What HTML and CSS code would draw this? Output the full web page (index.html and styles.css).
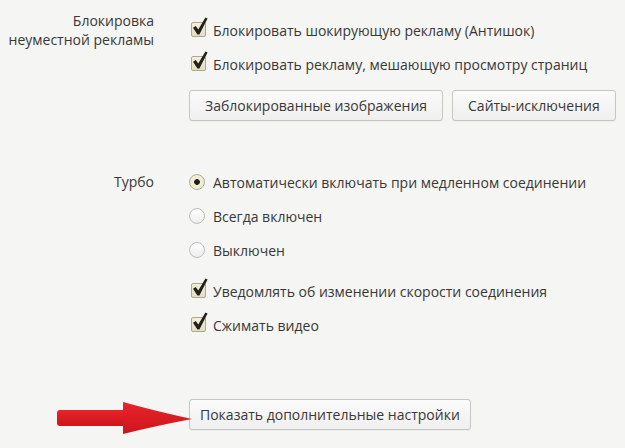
FILE: index.html
```html
<!DOCTYPE html>
<html lang="ru">
<head>
<meta charset="utf-8">
<title>Настройки</title>
<link rel="stylesheet" href="styles.css">
</head>
<body>
<div class="settings">
  <section class="section section-ads">
    <div class="label label-ads">Блокировка<br>неуместной рекламы</div>
    <div class="options">
      <div class="option">
        <span class="control"><svg class="checkbox" width="17" height="20" viewBox="0 0 17 20"><defs><linearGradient id="cb1" x1="0" y1="0" x2="0" y2="1"><stop offset="0" stop-color="#f4f0dc"/><stop offset="1" stop-color="#e4ddc0"/></linearGradient></defs><rect x="0.5" y="5.5" width="14" height="14" rx="1.5" fill="url(#cb1)" stroke="#aea790"/><path d="M2 10.8 L4.7 9 L7.3 12.4 L14.4 0.4 L16.6 1.6 L8.4 17.4 L6.4 17.4 Z" fill="#23221a"/></svg></span>
        <span class="text">Блокировать шокирующую рекламу (Антишок)</span>
      </div>
      <div class="option">
        <span class="control"><svg class="checkbox" width="17" height="20" viewBox="0 0 17 20"><rect x="0.5" y="5.5" width="14" height="14" rx="1.5" fill="url(#cb1)" stroke="#aea790"/><path d="M2 10.8 L4.7 9 L7.3 12.4 L14.4 0.4 L16.6 1.6 L8.4 17.4 L6.4 17.4 Z" fill="#23221a"/></svg></span>
        <span class="text">Блокировать рекламу, мешающую просмотру страниц</span>
      </div>
      <div class="buttons">
        <button class="btn">Заблокированные изображения</button>
        <button class="btn">Сайты-исключения</button>
      </div>
    </div>
  </section>

  <section class="section section-turbo">
    <div class="label label-turbo">Турбо</div>
    <div class="options">
      <div class="radio-group">
        <div class="option">
          <span class="control"><span class="radio checked"></span></span>
          <span class="text">Автоматически включать при медленном соединении</span>
        </div>
        <div class="option">
          <span class="control"><span class="radio"></span></span>
          <span class="text">Всегда включен</span>
        </div>
        <div class="option">
          <span class="control"><span class="radio"></span></span>
          <span class="text">Выключен</span>
        </div>
      </div>
      <div class="check-group">
        <div class="option">
          <span class="control"><svg class="checkbox" width="17" height="20" viewBox="0 0 17 20"><rect x="0.5" y="5.5" width="14" height="14" rx="1.5" fill="url(#cb1)" stroke="#aea790"/><path d="M2 10.8 L4.7 9 L7.3 12.4 L14.4 0.4 L16.6 1.6 L8.4 17.4 L6.4 17.4 Z" fill="#23221a"/></svg></span>
          <span class="text">Уведомлять об изменении скорости соединения</span>
        </div>
        <div class="option">
          <span class="control"><svg class="checkbox" width="17" height="20" viewBox="0 0 17 20"><rect x="0.5" y="5.5" width="14" height="14" rx="1.5" fill="url(#cb1)" stroke="#aea790"/><path d="M2 10.8 L4.7 9 L7.3 12.4 L14.4 0.4 L16.6 1.6 L8.4 17.4 L6.4 17.4 Z" fill="#23221a"/></svg></span>
          <span class="text">Сжимать видео</span>
        </div>
      </div>
    </div>
  </section>

  <section class="section section-more">
    <div class="label label-arrow">
      <svg class="arrow" width="138" height="38" viewBox="0 0 138 38"><defs><linearGradient id="ar" x1="0" y1="0" x2="0" y2="1"><stop offset="0" stop-color="#e8242a"/><stop offset="1" stop-color="#cc161c"/></linearGradient></defs><rect x="2" y="11" width="70" height="16" rx="3" fill="url(#ar)"/><path d="M68 3 Q100 12 137 20 Q100 27 68 35 Z" fill="url(#ar)"/></svg>
    </div>
    <div class="options">
      <button class="btn btn-more">Показать дополнительные настройки</button>
    </div>
  </section>
</div>
</body>
</html>
```

FILE: styles.css
```css
html, body {
  margin: 0;
  padding: 0;
  background: #f5f5f3;
}

body {
  font-family: "Open Sans", "Noto Sans", "DejaVu Sans", sans-serif;
  font-size: 14px;
  color: #383838;
  width: 625px;
  height: 448px;
  overflow: hidden;
}

.settings {
  display: flex;
  flex-direction: column;
  padding-top: 13px;
}

.section {
  display: grid;
  grid-template-columns: 154px 1fr;
  column-gap: 35px;
}

.label {
  text-align: right;
  line-height: 19px;
}

.label-ads {
  margin-top: -2px;
}

.label-turbo {
  padding-top: 7px;
}

.options {
  display: flex;
  flex-direction: column;
}

.option {
  display: flex;
  align-items: center;
  height: 34px;
}

.control {
  width: 24px;
  flex: none;
  display: flex;
  align-items: center;
}

.checkbox {
  margin-left: 2px;
  margin-top: -6px;
  display: block;
}

.radio {
  width: 14px;
  height: 14px;
  border-radius: 50%;
  border: 1px solid #bdbdbd;
  background: linear-gradient(#ffffff, #ececec);
  display: block;
}

.radio.checked {
  background: radial-gradient(circle, #1e1e1a 0, #1e1e1a 2.5px, #f1ecd6 3.2px, #efe9d0 100%);
  border-color: #b3ad98;
}

.text {
  white-space: nowrap;
}

.buttons {
  display: flex;
  gap: 9px;
  margin-top: 9px;
}

.btn {
  font: inherit;
  color: #383838;
  height: 31px;
  padding: 0 15px;
  border: 1px solid #c6c6c6;
  border-radius: 3px;
  background: linear-gradient(#fbfbfb, #efefef);
  box-shadow: 0 1px 0 rgba(0, 0, 0, 0.04);
  cursor: default;
}

.btn-more {
  padding: 0 10px;
}

.section-turbo {
  margin-top: 44px;
}

.check-group {
  margin-top: 7px;
}

.section-more {
  margin-top: 57px;
}

.section-more .options {
  align-items: flex-start;
}

.label-arrow {
  display: flex;
  justify-content: flex-end;
  align-items: center;
}

.arrow {
  display: block;
  margin-right: -39px;
  position: relative;
  z-index: 1;
}
```
